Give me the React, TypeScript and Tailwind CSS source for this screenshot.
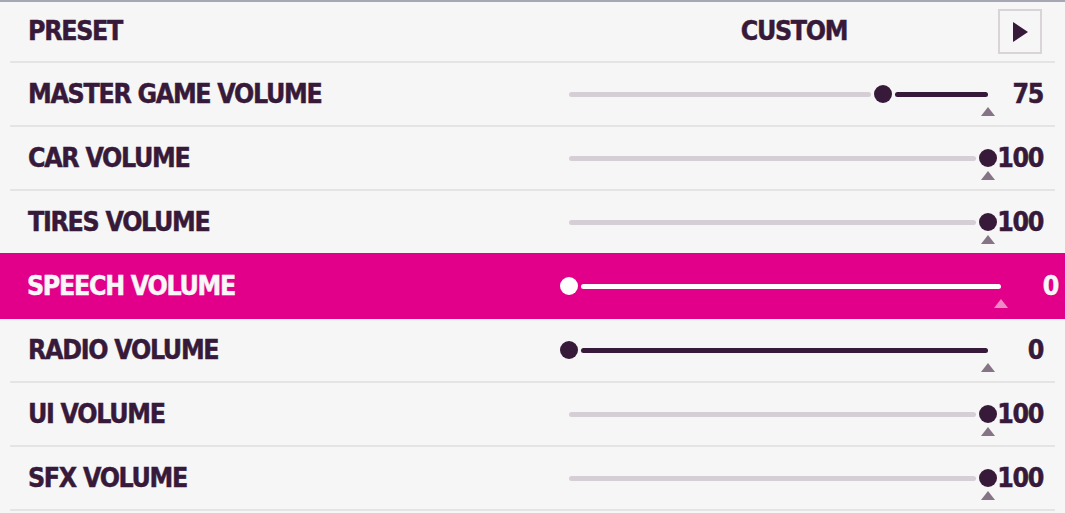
import React from "react";

const DARK = "#371939";

type SliderProps = { value: number; width: number; selected?: boolean };

function Slider({ value, width, selected }: SliderProps) {
  const range = width - 18;
  const cx = 9 + (range * value) / 100;
  const end = width - 9;
  const grayW = Math.max(0, cx - 12 - 9);
  const darkL = cx + 12;
  const darkW = Math.max(0, end - darkL);
  return (
    <div className="relative h-[18px] shrink-0" style={{ width }}>
      {grayW > 0 && (
        <div
          className={`absolute top-[7px] h-[5px] rounded-full ${selected ? "bg-[#f29ad0]" : "bg-[#d5cfd5]"}`}
          style={{ left: 9, width: grayW }}
        />
      )}
      {darkW > 0 && (
        <div
          className={`absolute top-[7px] h-[5px] rounded-full ${selected ? "bg-white" : "bg-[#371939]"}`}
          style={{ left: darkL, width: darkW }}
        />
      )}
      <div
        className={`absolute top-0 h-[18px] w-[18px] rounded-full ${selected ? "bg-white" : "bg-[#371939]"}`}
        style={{ left: cx - 9 }}
      />
      <svg
        className="absolute"
        style={{ left: end - 7, top: 22 }}
        width="14"
        height="9"
        viewBox="0 0 14 9"
      >
        <polygon points="7,0 14,9 0,9" fill={selected ? "#f08ac6" : "#857485"} />
      </svg>
    </div>
  );
}

const rows: { label: string; value: number; selected?: boolean }[] = [
  { label: "MASTER GAME VOLUME", value: 75 },
  { label: "CAR VOLUME", value: 100 },
  { label: "TIRES VOLUME", value: 100 },
  { label: "SPEECH VOLUME", value: 0, selected: true },
  { label: "RADIO VOLUME", value: 0 },
  { label: "UI VOLUME", value: 100 },
  { label: "SFX VOLUME", value: 100 },
];

const font =
  "font-['DejaVu_Sans_Condensed','DejaVu_Sans',sans-serif] font-bold text-[26.5px] tracking-[-1.3px] leading-none [-webkit-text-stroke:0.45px_currentColor]";

export default function App() {
  return (
    <div className={`w-[1065px] h-[513px] bg-[#f6f6f6] border-t-2 border-[#a6a7b4] overflow-hidden ${font} text-[#371939]`}>
      <div className="mx-[10px] h-[61px] border-b-2 border-[#e4e4e4] flex items-center">
        <div className="w-[580px] pl-[18px]">PRESET</div>
        <div className="w-[408px] text-center">CUSTOM</div>
        <div className="w-[44px] h-[45px] border-2 border-[#d8d4d8] flex items-center justify-center">
          <svg width="16" height="20" viewBox="0 0 16 20">
            <polygon points="1,0 16,10 1,20" fill={DARK} />
          </svg>
        </div>
      </div>
      {rows.map((r) =>
        r.selected ? (
          <div key={r.label} className="-mt-[2px] h-[66px] bg-[#e2008a] text-[#f7f7f7] flex items-center">
            <div className="w-[560px] pl-[27px]">{r.label}</div>
            <Slider value={r.value} width={450} selected />
            <div className="w-[48px] text-right">{r.value}</div>
          </div>
        ) : (
          <div key={r.label} className="mx-[10px] h-[64px] border-b-2 border-[#e4e4e4] flex items-center">
            <div className="w-[550px] pl-[18px]">{r.label}</div>
            <Slider value={r.value} width={437} />
            <div className="w-[46px] text-right">{r.value}</div>
          </div>
        )
      )}
    </div>
  );
}
